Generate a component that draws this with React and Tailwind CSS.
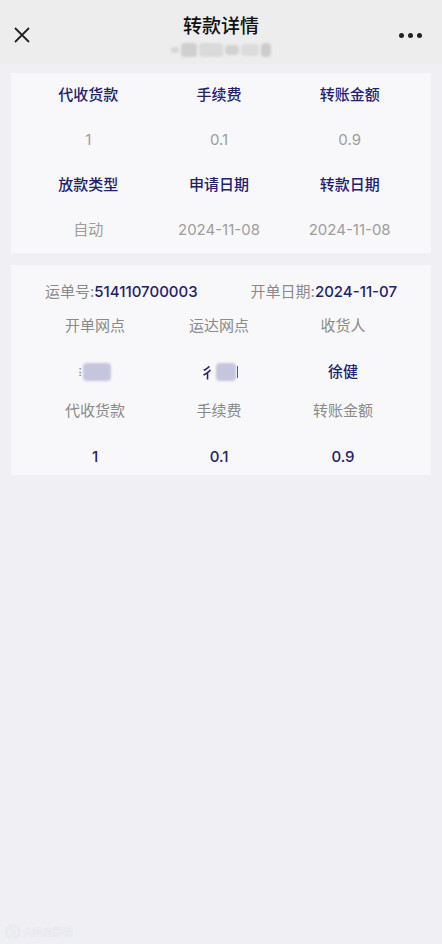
import React from 'react';

const navy = 'text-[#23216b]';

const Cell = ({ children, className = '' }) => (
  <div className={`flex items-center justify-center ${className}`}>{children}</div>
);

const Blur = ({ className = '' }) => (
  <span className={`inline-block rounded-sm blur-[1px] ${className}`} />
);

const App = () => {
  const summary = [
    { label: '代收货款', value: '1' },
    { label: '手续费', value: '0.1' },
    { label: '转账金额', value: '0.9' },
  ];
  const dates = [
    { label: '放款类型', value: '自动' },
    { label: '申请日期', value: '2024-11-08' },
    { label: '转款日期', value: '2024-11-08' },
  ];

  return (
    <div
      className="flex min-h-[944px] w-full flex-col bg-[#efeff4] text-[15px]"
      style={{ fontFamily: 'Inter, "Noto Sans CJK SC", "Noto Sans", sans-serif' }}
    >
      {/* header */}
      <div className="relative h-[64px] bg-[#ededed]">
        <div className="absolute left-[12px] top-[25px]">
          <svg width="20" height="20" viewBox="0 0 20 20" fill="none" stroke="#222" strokeWidth="1.8">
            <path d="M3 3 L17 17 M17 3 L3 17" />
          </svg>
        </div>
        <div className="flex flex-col items-center pt-[12px]">
          <div className="text-[19px] leading-[30px] font-medium text-[#111]">转款详情</div>
          <div className="mt-[1px] flex items-center gap-[2px]">
            <Blur className="h-[6px] w-[8px] bg-[#d6d6d6]" />
            <Blur className="h-[14px] w-[16px] bg-[#cfcfcf]" />
            <Blur className="h-[14px] w-[24px] bg-[#dadada]" />
            <Blur className="h-[10px] w-[14px] bg-[#d2d2d2]" />
            <Blur className="h-[12px] w-[18px] bg-[#dcdcdc]" />
            <Blur className="h-[14px] w-[10px] bg-[#cdcdcd]" />
          </div>
        </div>
        <div className="absolute right-[20px] top-[33px] flex gap-[4px]">
          <span className="h-[5px] w-[5px] rounded-full bg-[#222]" />
          <span className="h-[5px] w-[5px] rounded-full bg-[#222]" />
          <span className="h-[5px] w-[5px] rounded-full bg-[#222]" />
        </div>
      </div>

      {/* transfer summary */}
      <div className="mx-[11px] mt-[9px] bg-[#f8f8fa] pl-[12px] pr-[16px]">
        <div className="grid grid-cols-3">
          {summary.map((s) => (
            <Cell key={s.label} className={`h-[45px] font-medium ${navy}`}>{s.label}</Cell>
          ))}
          {summary.map((s) => (
            <Cell key={s.label} className="h-[45px] text-[#9d9d9d]">{s.value}</Cell>
          ))}
          {dates.map((s) => (
            <Cell key={s.label} className={`h-[45px] font-medium ${navy}`}>{s.label}</Cell>
          ))}
          {dates.map((s) => (
            <Cell key={s.label} className="h-[45px] text-[#9d9d9d]">{s.value}</Cell>
          ))}
        </div>
      </div>

      {/* waybill */}
      <div className="mx-[11px] mt-[12px] bg-[#f8f8fa] pt-[10px] pb-[8px]">
        <div className="flex h-[34px] items-center justify-between px-[34px]">
          <div>
            <span className="text-[#8a8a8a]">运单号:</span>
            <span className={`font-medium ${navy}`}>514110700003</span>
          </div>
          <div>
            <span className="text-[#8a8a8a]">开单日期:</span>
            <span className={`font-medium ${navy}`}>2024-11-07</span>
          </div>
        </div>
        <div className="grid grid-cols-3 pl-[22px] pr-[26px]">
          <Cell className="h-[34px] text-[#8a8a8a]">开单网点</Cell>
          <Cell className="h-[34px] text-[#8a8a8a]">运达网点</Cell>
          <Cell className="h-[34px] text-[#8a8a8a]">收货人</Cell>

          <Cell className="h-[58px]">
            <span className="flex items-center gap-[2px]">
              <span className="text-[10px] leading-none text-[#555]">⁝</span>
              <Blur className="h-[18px] w-[28px] bg-[#c6c5de]" />
            </span>
          </Cell>
          <Cell className="h-[58px]">
            <span className="flex items-center gap-[1px]">
              <span className={`text-[15px] leading-none font-medium ${navy} blur-[0.6px]`}>彳</span>
              <Blur className="h-[18px] w-[20px] bg-[#c6c5de]" />
              <span className="h-[12px] w-[1px] bg-[#555]" />
            </span>
          </Cell>
          <Cell className={`h-[58px] font-medium ${navy}`}>徐健</Cell>

          <Cell className="h-[20px] text-[#8a8a8a]">代收货款</Cell>
          <Cell className="h-[20px] text-[#8a8a8a]">手续费</Cell>
          <Cell className="h-[20px] text-[#8a8a8a]">转账金额</Cell>

          <Cell className={`mt-[26px] h-[20px] font-medium ${navy}`}>1</Cell>
          <Cell className={`mt-[26px] h-[20px] font-medium ${navy}`}>0.1</Cell>
          <Cell className={`mt-[26px] h-[20px] font-medium ${navy}`}>0.9</Cell>
        </div>
      </div>

      <div className="mt-auto pb-[4px] pl-[6px] text-[10px] text-[#f4f4f8] [text-shadow:0_0_1px_#c8c8d2]">
        ⑤ 大西瓜影视
      </div>
    </div>
  );
};

export default App;
